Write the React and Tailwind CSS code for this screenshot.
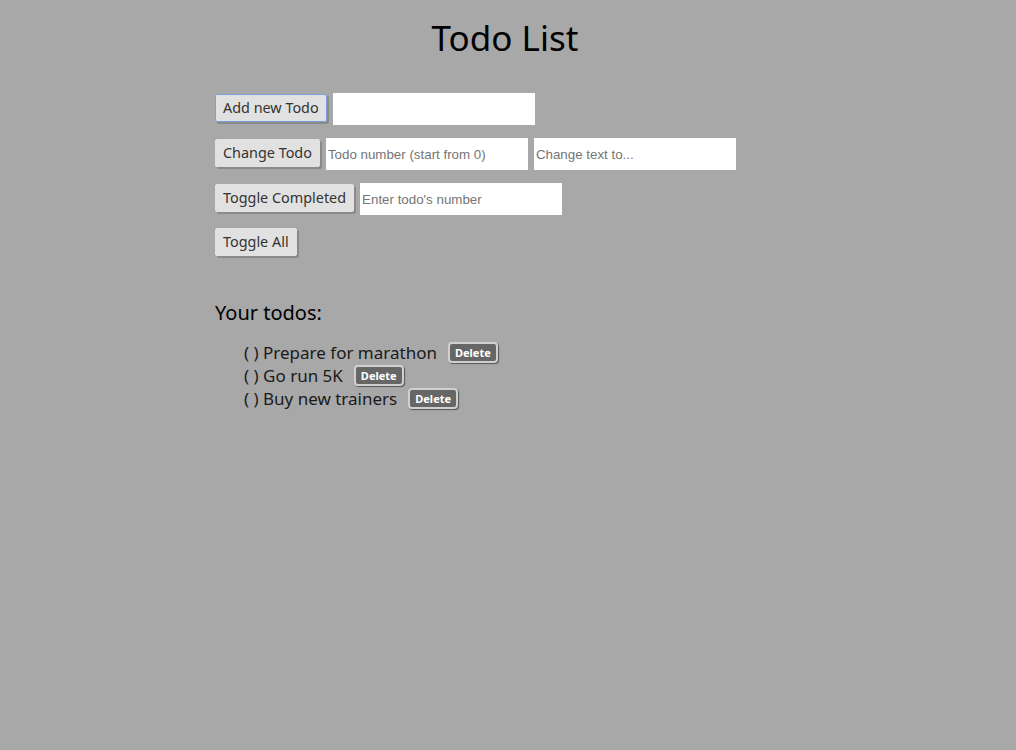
import React from "react";

const todos = ["Prepare for marathon", "Go run 5K", "Buy new trainers"];

const Btn = ({ children, focused, top = true }) => (
  <button
    className={
      (top ? "mt-[1px] " : "") +
      (focused
        ? "h-[28px] px-[7px] bg-[#e1e1e1] text-[#333] text-[14.4px] leading-none border border-[#7d9ed8] rounded-[2px] shadow-[2px_2px_0_#8a8a8a]"
        : "h-[28px] px-[7px] bg-[#e1e1e1] text-[#333] text-[14.4px] leading-none border border-[#e1e1e1] rounded-[2px] shadow-[2px_2px_0_#8a8a8a]")
    }
  >
    {children}
  </button>
);

const Field = ({ placeholder }) => (
  <input
    placeholder={placeholder}
    className="w-[202px] h-[32px] bg-white px-[2px] text-[13.33px] font-['Liberation_Sans',Arial,sans-serif] placeholder:text-[#757575] outline-none"
  />
);

export default function App() {
  return (
    <div className="min-h-[750px] bg-[#a8a8a8] font-['Noto_Sans',sans-serif] text-black">
      <h1 className="text-center text-[35px] leading-none pt-[20px] pr-[6px]">Todo List</h1>
      <div className="pl-[215px] pt-[38px] flex flex-col">
        <div className="flex items-start gap-[6px]">
          <Btn focused>Add new Todo</Btn>
          <Field placeholder="" />
        </div>
        <div className="flex items-start gap-[6px] mt-[13px]">
          <Btn>Change Todo</Btn>
          <Field placeholder="Todo number (start from 0)" />
          <Field placeholder="Change text to..." />
        </div>
        <div className="flex items-start gap-[6px] mt-[13px]">
          <Btn>Toggle Completed</Btn>
          <Field placeholder="Enter todo's number" />
        </div>
        <div className="flex items-start mt-[13px]">
          <Btn top={false}>Toggle All</Btn>
        </div>
        <h2 className="text-[20px] leading-none mt-[47px]">Your todos:</h2>
        <ul className="mt-[18px] pl-[29px] text-[17px] text-[#1a1a1a]">
          {todos.map((t) => (
            <li key={t} className="flex items-center h-[23px]">
              <span>( ) {t}</span>
              <button className="ml-[11px] h-[21px] px-[5px] bg-[#666] text-white text-[11px] font-bold leading-none border-2 border-[#d0d0d0] rounded-[4px] shadow-[1px_1px_1px_#555]">
                Delete
              </button>
            </li>
          ))}
        </ul>
      </div>
    </div>
  );
}
